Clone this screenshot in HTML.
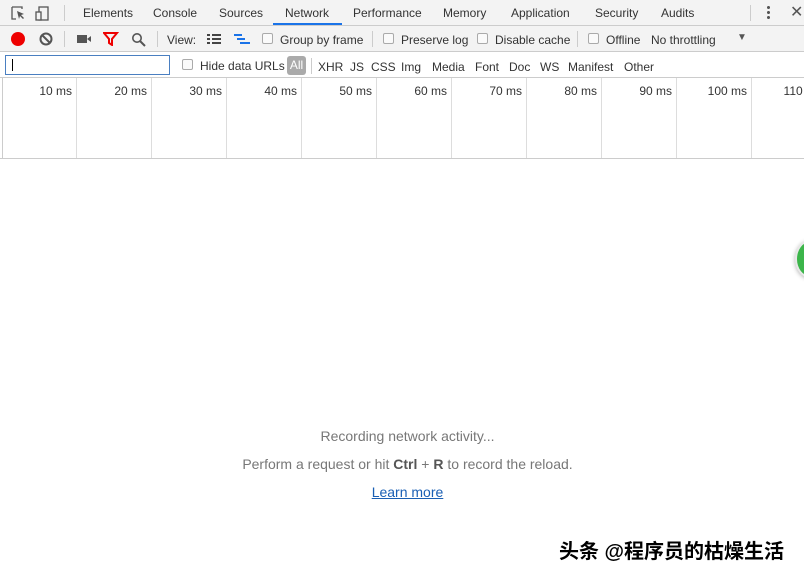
<!DOCTYPE html>
<html><head><meta charset="utf-8"><style>
*{box-sizing:border-box;margin:0;padding:0}
body{width:804px;height:575px;overflow:hidden;background:#fff;font-family:"Liberation Sans",sans-serif;font-size:12px;color:#333;position:relative}
.a{position:absolute;white-space:nowrap}
.bar{position:absolute;left:0;width:804px;background:#f3f3f3;border-bottom:1px solid #ccc}
.sep{position:absolute;width:1px;background:#ccc}
.cb{position:absolute;width:11px;height:11px;border:1px solid #aaa;border-radius:2px;background:#fafafa}
</style></head><body>
<div class="bar" style="top:0;height:26px"></div>
<div class="bar" style="top:26px;height:26px"></div>
<div class="bar" style="top:52px;height:26px;background:#fff;border-bottom:1px solid #ccc"></div>
<svg class="a" style="left:10px;top:5px" width="50" height="18"><path d="M2 2h10v2M2 2v12h4" fill="none" stroke="#555" stroke-width="1.3"/><path d="M7 6l7 3-3 1 3 3-1 1-3-3-1 3z" fill="#555"/><rect x="29" y="2" width="9" height="13" fill="none" stroke="#555" stroke-width="1.3"/><rect x="26" y="7" width="5" height="8" fill="#f3f3f3" stroke="#555" stroke-width="1.3"/></svg>
<div class="sep" style="left:64px;top:5px;height:16px"></div>
<div class="a" style="left:83px;top:6px">Elements</div>
<div class="a" style="left:153px;top:6px">Console</div>
<div class="a" style="left:219px;top:6px">Sources</div>
<div class="a" style="left:285px;top:6px">Network</div>
<div class="a" style="left:273px;top:23px;width:69px;height:2px;background:#1a73e8"></div>
<div class="a" style="left:353px;top:6px">Performance</div>
<div class="a" style="left:443px;top:6px">Memory</div>
<div class="a" style="left:511px;top:6px">Application</div>
<div class="a" style="left:595px;top:6px">Security</div>
<div class="a" style="left:661px;top:6px">Audits</div>
<div class="sep" style="left:750px;top:5px;height:16px"></div>
<div class="a" style="left:767px;top:5px;width:3px;height:14px;background:radial-gradient(circle,#555 1.4px,transparent 1.6px) 0 0/3px 5px"></div>
<div class="a" style="left:790px;top:2px;font-size:16px;color:#555">✕</div>
<div class="a" style="left:11px;top:32px;width:14px;height:14px;border-radius:50%;background:#e00"></div>
<svg class="a" style="left:39px;top:32px" width="14" height="14"><circle cx="7" cy="7" r="5.5" fill="none" stroke="#555" stroke-width="2"/><path d="M3 3l8 8" stroke="#555" stroke-width="2"/></svg>
<div class="sep" style="left:64px;top:31px;height:16px"></div>
<svg class="a" style="left:76px;top:33px" width="16" height="12"><rect x="1" y="2" width="10" height="8" fill="#555"/><path d="M11 6l4-3v6z" fill="#555"/></svg>
<svg class="a" style="left:103px;top:32px" width="16" height="14"><path d="M1 1h13l-5 6v6l-3-2v-4z" fill="none" stroke="#e00" stroke-width="2"/></svg>
<svg class="a" style="left:131px;top:32px" width="15" height="15"><circle cx="6" cy="6" r="4.2" fill="none" stroke="#555" stroke-width="1.6"/><path d="M9 9l5 5" stroke="#555" stroke-width="2"/></svg>
<div class="sep" style="left:157px;top:31px;height:16px"></div>
<div class="a" style="left:167px;top:33px">View:</div>
<svg class="a" style="left:206px;top:33px" width="16" height="12"><path d="M1 2h3M6 2h9M1 6h3M6 6h9M1 10h3M6 10h9" stroke="#444" stroke-width="2"/></svg>
<svg class="a" style="left:233px;top:33px" width="18" height="12"><path d="M1 2h8M4 6h8M7 10h10" stroke="#1a73e8" stroke-width="2"/></svg>
<div class="cb" style="left:262px;top:33px"></div><div class="a" style="left:280px;top:33px">Group by frame</div>
<div class="sep" style="left:372px;top:31px;height:16px"></div>
<div class="cb" style="left:383px;top:33px"></div><div class="a" style="left:401px;top:33px">Preserve log</div>
<div class="cb" style="left:477px;top:33px"></div><div class="a" style="left:495px;top:33px">Disable cache</div>
<div class="sep" style="left:577px;top:31px;height:16px"></div>
<div class="cb" style="left:588px;top:33px"></div><div class="a" style="left:606px;top:33px">Offline</div>
<div class="a" style="left:651px;top:33px">No throttling</div>
<div class="a" style="left:737px;top:32px;font-size:10px;color:#555">▼</div>
<div class="a" style="left:5px;top:55px;width:165px;height:20px;border:1px solid #4a7fc1;background:#fff"><div style="position:absolute;left:6px;top:3px;width:1px;height:12px;background:#000"></div></div>
<div class="cb" style="left:182px;top:59px"></div><div class="a" style="left:200px;top:59px">Hide data URLs</div>
<div class="a" style="left:287px;top:56px;width:19px;height:19px;background:#aaa;border-radius:3px;color:#fff;text-align:center;line-height:19px">All</div>
<div class="sep" style="left:311px;top:58px;height:16px"></div>
<div class="a" style="left:318px;top:60px">XHR</div>
<div class="a" style="left:350px;top:60px">JS</div>
<div class="a" style="left:371px;top:60px">CSS</div>
<div class="a" style="left:401px;top:60px">Img</div>
<div class="a" style="left:432px;top:60px">Media</div>
<div class="a" style="left:475px;top:60px">Font</div>
<div class="a" style="left:509px;top:60px">Doc</div>
<div class="a" style="left:540px;top:60px">WS</div>
<div class="a" style="left:568px;top:60px">Manifest</div>
<div class="a" style="left:624px;top:60px">Other</div>
<div class="a" style="left:0;top:78px;width:804px;height:81px;border-bottom:1px solid #ccc"></div>
<div class="a" style="left:2px;top:78px;width:1px;height:80px;background:#ccc"></div>
<div id="g"></div>
<script>
var h='';for(var i=1;i<=11;i++){var x=1+75*i;h+='<div class="sep" style="left:'+x+'px;top:78px;height:80px;background:#ddd"></div><div class="a" style="left:'+(x-60)+'px;width:56px;text-align:right;top:84px">'+(i*10)+' ms</div>';}document.getElementById('g').innerHTML=h;
</script>
<div class="a" style="left:795px;top:240px;width:30px;height:38px;border-radius:50%;background:#3cb54a;border:2px solid #e8e8e8;box-shadow:0 1px 4px rgba(0,0,0,.3)"></div>
<div class="a" style="left:0;width:815px;text-align:center;top:428px;font-size:14px;color:#777">Recording network activity...</div>
<div class="a" style="left:0;width:815px;text-align:center;top:456px;font-size:14px;color:#777">Perform a request or hit <b style="color:#555">Ctrl</b> + <b style="color:#555">R</b> to record the reload.</div>
<div class="a" style="left:0;width:815px;text-align:center;top:484px;font-size:14px;color:#1a5fb4;text-decoration:underline">Learn more</div>
<div class="a" style="left:559px;top:535px;font-size:20px;color:#000;font-weight:bold;font-family:'Liberation Sans','Noto Sans CJK SC',sans-serif">头条 @程序员的枯燥生活</div>
</body></html>
